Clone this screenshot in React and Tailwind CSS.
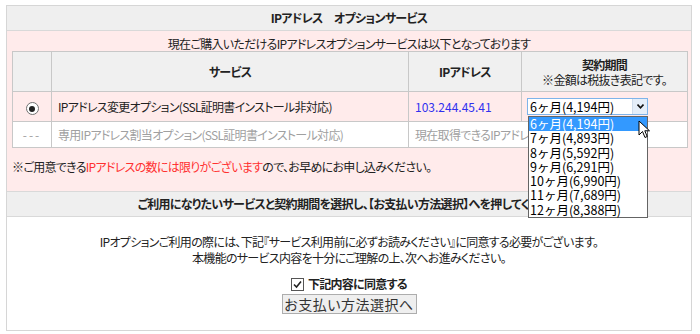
const font = "font-['Noto_Sans_CJK_JP','Noto_Sans',sans-serif]"
const palt = "[font-feature-settings:'palt']"

const periods = [
  '6ヶ月(4,194円)',
  '7ヶ月(4,893円)',
  '8ヶ月(5,592円)',
  '9ヶ月(6,291円)',
  '10ヶ月(6,990円)',
  '11ヶ月(7,689円)',
  '12ヶ月(8,388円)',
]

function Radio() {
  return (
    <span className="inline-flex w-[13px] h-[13px] rounded-full border border-[#707070] bg-white items-center justify-center">
      <span className="w-[6px] h-[6px] rounded-full bg-[#222]" />
    </span>
  )
}

function Checkbox() {
  return (
    <span className="inline-flex w-[13px] h-[13px] border border-[#555] bg-white items-center justify-center">
      <svg width="9" height="9" viewBox="0 0 9 9">
        <path d="M1 4.5 L3.5 7 L8 1.5" fill="none" stroke="#222" strokeWidth="1.6" />
      </svg>
    </span>
  )
}

function PeriodSelect() {
  return (
    <div className="relative w-[121px] h-[17px] tracking-normal [font-feature-settings:normal]">
      <div className="flex h-full border border-[#7eb4ea] bg-white">
        <span className="flex-1 pl-[2px] text-[12.5px] leading-[15px] text-black whitespace-nowrap">{periods[0]}</span>
        <span className="w-[15px] flex items-center justify-center bg-[#e5eef9] border-l border-[#cfdcec]">
          <svg width="7" height="5" viewBox="0 0 7 5">
            <path d="M0.5 0.5 L3.5 3.8 L6.5 0.5" fill="none" stroke="#111" strokeWidth="1.6" />
          </svg>
        </span>
      </div>
      <ul className="absolute left-[1px] top-[18px] w-[120px] border border-[#646464] bg-white z-10">
        {periods.map((p, i) => (
          <li
            key={p}
            className={
              i === 0
                ? 'h-[14.3px] leading-[14px] pl-[1px] text-[12.5px] whitespace-nowrap bg-[#3399ff] text-white'
                : 'h-[14.3px] leading-[14px] pl-[1px] text-[12.5px] whitespace-nowrap text-black'
            }
          >
            {p}
          </li>
        ))}
      </ul>
      <svg className="absolute left-[111px] top-[22px] z-20" width="14" height="20" viewBox="0 0 14 20">
        <path d="M1 1 L1 15 L4.5 11.5 L7 17.5 L9.2 16.5 L6.8 10.8 L11.5 10.8 Z" fill="#fff" stroke="#000" strokeWidth="1" strokeLinejoin="round" />
      </svg>
    </div>
  )
}

export default function App() {
  return (
    <div className={`${font} ${palt} bg-white w-[700px] h-[334px] pt-[5px] text-[12px] tracking-[-0.7px] text-[#222]`}>
      <div className="ml-[6px] w-[686px] border border-[#d6d6d6]">
        <div className="h-[25px] bg-[#efefef] border-b border-[#d9d9d9] flex items-center justify-center font-bold">
          IPアドレス　オプションサービス
        </div>

        <div className="bg-[#ffebeb]">
          <p className="pt-[6px] h-[20px] leading-[14px] text-center">
            現在ご購入いただけるIPアドレスオプションサービスは以下となっております
          </p>
          <table className="ml-[5px] w-[675px] border-collapse table-fixed">
            <colgroup>
              <col className="w-[39px]" />
              <col className="w-[357px]" />
              <col className="w-[113px]" />
              <col className="w-[166px]" />
            </colgroup>
            <thead>
              <tr className="h-[40px] bg-[#f0f0f0]">
                <th className="border border-[#c8c8c8]" />
                <th className="border border-[#c8c8c8] font-bold">サービス</th>
                <th className="border border-[#c8c8c8] font-bold">IPアドレス</th>
                <th className="border border-[#c8c8c8] leading-[15px]">
                  <div className="font-bold">契約期間</div>
                  <div className="font-normal">※金額は税抜き表記です。</div>
                </th>
              </tr>
            </thead>
            <tbody>
              <tr className="h-[30px]">
                <td className="border border-[#c8c8c8] text-center align-middle">
                  <span className="inline-flex pt-[2px]"><Radio /></span>
                </td>
                <td className="border border-[#c8c8c8] pl-[6px]">IPアドレス変更オプション(SSL証明書インストール非対応)</td>
                <td className="border border-[#c8c8c8] pl-[6px] tracking-normal text-[#3030f0]">103.244.45.41</td>
                <td className="border border-[#c8c8c8] pl-[5px]">
                  <PeriodSelect />
                </td>
              </tr>
              <tr className="h-[26px] bg-white text-[#a0a0a0]">
                <td className="border border-[#c8c8c8] text-center tracking-[2px]">---</td>
                <td className="border border-[#c8c8c8] pl-[6px]">専用IPアドレス割当オプション(SSL証明書インストール対応)</td>
                <td colSpan={2} className="border border-[#c8c8c8] pl-[6px] whitespace-nowrap overflow-hidden">
                  現在取得できるIPアドレスはございません
                </td>
              </tr>
            </tbody>
          </table>
          <p className="pl-[5px] pt-[12px] pb-[17px] leading-[14px]">
            ※ご用意できる<span className="text-[#ff3030]">IPアドレスの数には限りがございます</span>ので、お早めにお申し込みください。
          </p>
        </div>

        <div className="h-[26px] bg-[#efefef] border-y border-[#d9d9d9] flex items-center justify-center font-bold">
          ご利用になりたいサービスと契約期間を選択し、【お支払い方法選択】へを押してください
        </div>

        <div className="flex flex-col items-center pt-[17px] pb-[16px]">
          <p className="leading-[16px] text-center">
            IPオプションご利用の際には、下記『サービス利用前に必ずお読みください』に同意する必要がございます。
          </p>
          <p className="leading-[16px] text-center">本機能のサービス内容を十分にご理解の上、次へお進みください。</p>
          <label className="mt-[10px] h-[16px] flex items-center gap-[4px] font-bold">
            <Checkbox />
            下記内容に同意する
          </label>
          <button className="mt-[2px] w-[135px] h-[20px] bg-[#efefef] border border-[#adadad] text-[14px] leading-[18px] tracking-[0.5px] text-[#333]">
            お支払い方法選択へ
          </button>
        </div>
      </div>
    </div>
  )
}
